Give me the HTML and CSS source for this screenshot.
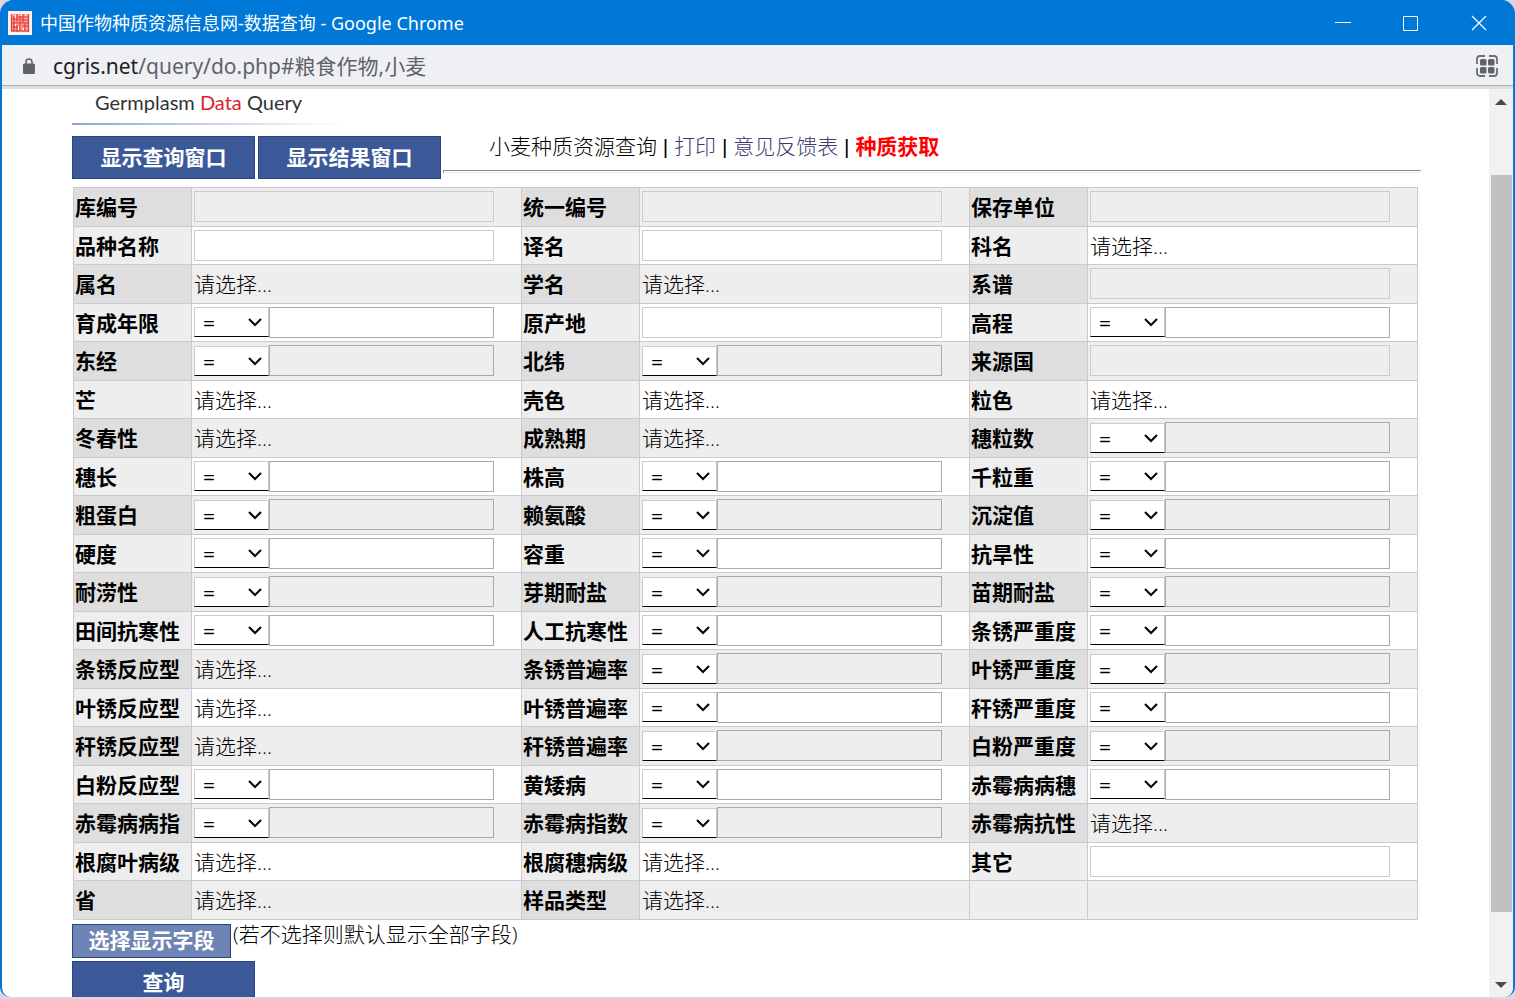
FILE: index.html
```
<!DOCTYPE html>
<html lang="zh-CN">
<head>
<meta charset="utf-8">
<title>中国作物种质资源信息网-数据查询</title>
<link rel="stylesheet" href="styles.css">
</head>
<body>
<div class="window">
  <header class="titlebar">
    <svg class="favicon" viewBox="0 0 24 24" aria-hidden="true">
      <rect width="24" height="24" fill="#fdf1ef"/>
      <rect x="3" y="3" width="18" height="18" fill="#f8a49c"/>
      <path d="M3.500 3.500v17M9 3v8M12 5v15M15 3v9M20.500 3v18M3 8h8M10 6h11M3 12h18M13 9h7M6 5v15M3 16h7M14 15h6M17 12v8M9 14v7M4 20h16" stroke="#e23a34" stroke-width="1.200" fill="none"/>
      <path d="M7.500 4v3M13.500 3v2M18 4v1M7.500 13v2M15.500 17v2M10.500 16v3" stroke="#fff" stroke-width="1"/>
    </svg>
    <span class="window-title">中国作物种质资源信息网-数据查询 - Google Chrome</span>
    <div class="window-controls">
      <button type="button" aria-label="最小化"><svg viewBox="0 0 16 16"><path d="M0 7.500h16"/></svg></button>
      <button type="button" aria-label="最大化"><svg viewBox="0 0 16 16"><path d="M.5 1.500h14v14H.5z"/></svg></button>
      <button type="button" aria-label="关闭"><svg viewBox="0 0 16 16"><path d="M1 1l14 14M15 1l-14 14" stroke-width="1.200"/></svg></button>
    </div>
  </header>
  <div class="addressbar">
    <svg class="lock" viewBox="0 0 12 16" aria-hidden="true"><path d="M3 7V4a3 3 0 0 1 6 0v3" fill="none" stroke="#5f6368" stroke-width="1.600"/><rect y="5.500" width="12" height="10.500" rx="1.500" fill="#5f6368"/></svg>
    <span class="url"><span class="host">cgris.net</span>/query/do.php#粮食作物,小麦</span>
    <button type="button" class="qr" aria-label="二维码"><svg viewBox="0 0 22 22"><path d="M9 1H4a3 3 0 0 0-3 3v5M13 1h5a3 3 0 0 1 3 3v5M9 21H4a3 3 0 0 1-3-3v-5M13 21h5a3 3 0 0 0 3-3v-5" fill="none" stroke="#6b6e72" stroke-width="1.800"/><g fill="#5f6368"><rect x="4" y="4" width="6.500" height="6.500" rx="1.500"/><rect x="12" y="4" width="6.500" height="6.500" rx="1.500"/><rect x="4" y="12" width="6.500" height="6.500" rx="1.500"/><rect x="12" y="12" width="6.500" height="6.500" rx="1.500"/></g></svg></button>
  </div>
  <div class="viewport">
    <main class="page">
      <div class="logo">Germplasm <span>Data</span> Query</div>
      <div class="toolbar">
        <button type="button" class="btn">显示查询窗口</button>
        <button type="button" class="btn">显示结果窗口</button>
        <div class="crumbs">
          <nav>小麦种质资源查询 | <a href="#print">打印</a> | <a href="#feedback">意见反馈表</a> | <a href="#obtain" class="obtain">种质获取</a></nav>
          <hr>
        </div>
      </div>
      <form>
        <table class="fields">
          <colgroup><col class="name"><col><col class="name"><col><col class="name"><col></colgroup>
          <tbody>
          <tr>
            <th><label for="f1">库编号</label></th><td><input id="f1" class="text"></td>
            <th><label for="f2">统一编号</label></th><td><input id="f2" class="text"></td>
            <th><label for="f3">保存单位</label></th><td><input id="f3" class="text"></td>
          </tr>
          <tr>
            <th><label for="f4">品种名称</label></th><td><input id="f4" class="text"></td>
            <th><label for="f5">译名</label></th><td><input id="f5" class="text"></td>
            <th><label for="f6">科名</label></th><td><button type="button" id="f6" class="pick">请选择...</button></td>
          </tr>
          <tr>
            <th><label for="f7">属名</label></th><td><button type="button" id="f7" class="pick">请选择...</button></td>
            <th><label for="f8">学名</label></th><td><button type="button" id="f8" class="pick">请选择...</button></td>
            <th><label for="f9">系谱</label></th><td><input id="f9" class="text"></td>
          </tr>
          <tr>
            <th><label for="f10">育成年限</label></th><td><div class="compare"><select aria-label="育成年限比较"><option>=</option></select><input id="f10"></div></td>
            <th><label for="f11">原产地</label></th><td><input id="f11" class="text"></td>
            <th><label for="f12">高程</label></th><td><div class="compare"><select aria-label="高程比较"><option>=</option></select><input id="f12"></div></td>
          </tr>
          <tr>
            <th><label for="f13">东经</label></th><td><div class="compare"><select aria-label="东经比较"><option>=</option></select><input id="f13"></div></td>
            <th><label for="f14">北纬</label></th><td><div class="compare"><select aria-label="北纬比较"><option>=</option></select><input id="f14"></div></td>
            <th><label for="f15">来源国</label></th><td><input id="f15" class="text"></td>
          </tr>
          <tr>
            <th><label for="f16">芒</label></th><td><button type="button" id="f16" class="pick">请选择...</button></td>
            <th><label for="f17">壳色</label></th><td><button type="button" id="f17" class="pick">请选择...</button></td>
            <th><label for="f18">粒色</label></th><td><button type="button" id="f18" class="pick">请选择...</button></td>
          </tr>
          <tr>
            <th><label for="f19">冬春性</label></th><td><button type="button" id="f19" class="pick">请选择...</button></td>
            <th><label for="f20">成熟期</label></th><td><button type="button" id="f20" class="pick">请选择...</button></td>
            <th><label for="f21">穗粒数</label></th><td><div class="compare"><select aria-label="穗粒数比较"><option>=</option></select><input id="f21"></div></td>
          </tr>
          <tr>
            <th><label for="f22">穗长</label></th><td><div class="compare"><select aria-label="穗长比较"><option>=</option></select><input id="f22"></div></td>
            <th><label for="f23">株高</label></th><td><div class="compare"><select aria-label="株高比较"><option>=</option></select><input id="f23"></div></td>
            <th><label for="f24">千粒重</label></th><td><div class="compare"><select aria-label="千粒重比较"><option>=</option></select><input id="f24"></div></td>
          </tr>
          <tr>
            <th><label for="f25">粗蛋白</label></th><td><div class="compare"><select aria-label="粗蛋白比较"><option>=</option></select><input id="f25"></div></td>
            <th><label for="f26">赖氨酸</label></th><td><div class="compare"><select aria-label="赖氨酸比较"><option>=</option></select><input id="f26"></div></td>
            <th><label for="f27">沉淀值</label></th><td><div class="compare"><select aria-label="沉淀值比较"><option>=</option></select><input id="f27"></div></td>
          </tr>
          <tr>
            <th><label for="f28">硬度</label></th><td><div class="compare"><select aria-label="硬度比较"><option>=</option></select><input id="f28"></div></td>
            <th><label for="f29">容重</label></th><td><div class="compare"><select aria-label="容重比较"><option>=</option></select><input id="f29"></div></td>
            <th><label for="f30">抗旱性</label></th><td><div class="compare"><select aria-label="抗旱性比较"><option>=</option></select><input id="f30"></div></td>
          </tr>
          <tr>
            <th><label for="f31">耐涝性</label></th><td><div class="compare"><select aria-label="耐涝性比较"><option>=</option></select><input id="f31"></div></td>
            <th><label for="f32">芽期耐盐</label></th><td><div class="compare"><select aria-label="芽期耐盐比较"><option>=</option></select><input id="f32"></div></td>
            <th><label for="f33">苗期耐盐</label></th><td><div class="compare"><select aria-label="苗期耐盐比较"><option>=</option></select><input id="f33"></div></td>
          </tr>
          <tr>
            <th><label for="f34">田间抗寒性</label></th><td><div class="compare"><select aria-label="田间抗寒性比较"><option>=</option></select><input id="f34"></div></td>
            <th><label for="f35">人工抗寒性</label></th><td><div class="compare"><select aria-label="人工抗寒性比较"><option>=</option></select><input id="f35"></div></td>
            <th><label for="f36">条锈严重度</label></th><td><div class="compare"><select aria-label="条锈严重度比较"><option>=</option></select><input id="f36"></div></td>
          </tr>
          <tr>
            <th><label for="f37">条锈反应型</label></th><td><button type="button" id="f37" class="pick">请选择...</button></td>
            <th><label for="f38">条锈普遍率</label></th><td><div class="compare"><select aria-label="条锈普遍率比较"><option>=</option></select><input id="f38"></div></td>
            <th><label for="f39">叶锈严重度</label></th><td><div class="compare"><select aria-label="叶锈严重度比较"><option>=</option></select><input id="f39"></div></td>
          </tr>
          <tr>
            <th><label for="f40">叶锈反应型</label></th><td><button type="button" id="f40" class="pick">请选择...</button></td>
            <th><label for="f41">叶锈普遍率</label></th><td><div class="compare"><select aria-label="叶锈普遍率比较"><option>=</option></select><input id="f41"></div></td>
            <th><label for="f42">秆锈严重度</label></th><td><div class="compare"><select aria-label="秆锈严重度比较"><option>=</option></select><input id="f42"></div></td>
          </tr>
          <tr>
            <th><label for="f43">秆锈反应型</label></th><td><button type="button" id="f43" class="pick">请选择...</button></td>
            <th><label for="f44">秆锈普遍率</label></th><td><div class="compare"><select aria-label="秆锈普遍率比较"><option>=</option></select><input id="f44"></div></td>
            <th><label for="f45">白粉严重度</label></th><td><div class="compare"><select aria-label="白粉严重度比较"><option>=</option></select><input id="f45"></div></td>
          </tr>
          <tr>
            <th><label for="f46">白粉反应型</label></th><td><div class="compare"><select aria-label="白粉反应型比较"><option>=</option></select><input id="f46"></div></td>
            <th><label for="f47">黄矮病</label></th><td><div class="compare"><select aria-label="黄矮病比较"><option>=</option></select><input id="f47"></div></td>
            <th><label for="f48">赤霉病病穗</label></th><td><div class="compare"><select aria-label="赤霉病病穗比较"><option>=</option></select><input id="f48"></div></td>
          </tr>
          <tr>
            <th><label for="f49">赤霉病病指</label></th><td><div class="compare"><select aria-label="赤霉病病指比较"><option>=</option></select><input id="f49"></div></td>
            <th><label for="f50">赤霉病指数</label></th><td><div class="compare"><select aria-label="赤霉病指数比较"><option>=</option></select><input id="f50"></div></td>
            <th><label for="f51">赤霉病抗性</label></th><td><button type="button" id="f51" class="pick">请选择...</button></td>
          </tr>
          <tr>
            <th><label for="f52">根腐叶病级</label></th><td><button type="button" id="f52" class="pick">请选择...</button></td>
            <th><label for="f53">根腐穗病级</label></th><td><button type="button" id="f53" class="pick">请选择...</button></td>
            <th><label for="f54">其它</label></th><td><input id="f54" class="text"></td>
          </tr>
          <tr>
            <th><label for="f55">省</label></th><td><button type="button" id="f55" class="pick">请选择...</button></td>
            <th><label for="f56">样品类型</label></th><td><button type="button" id="f56" class="pick">请选择...</button></td>
            <td></td><td></td>
          </tr>
          </tbody>
        </table>
        <div class="columns-row">
          <button type="button" class="btn btn-light">选择显示字段</button>
          <span>(若不选择则默认显示全部字段)</span>
        </div>
        <button type="submit" class="btn">查询</button>
      </form>
    </main>
    <div class="scrollbar" aria-hidden="true">
      <svg class="arrow" viewBox="0 0 12 6"><path d="M0 6L6 0l6 6z"/></svg>
      <div class="track"><div class="thumb"></div></div>
      <svg class="arrow" viewBox="0 0 12 6"><path d="M0 0h12L6 6z"/></svg>
    </div>
  </div>
</div>
</body>
</html>
```
FILE: styles.css
```
* { box-sizing: border-box; }

html, body { height: 100%; margin: 0; }

body {
  background: #ddd6e2;
  color: #000;
  font: 21px/28px "Open Sans", "Noto Sans CJK SC", sans-serif;
  overflow: hidden;
  padding-bottom: 2px;
}

button, input, select { font: inherit; color: inherit; margin: 0; }

.window {
  display: flex;
  flex-direction: column;
  height: 100%;
  border: solid #0078d7;
  border-width: 0 2px;
  border-radius: 14px 14px 10px 10px;
  background: #0078d7;
  overflow: hidden;
}

.titlebar, .addressbar { font-family: "Noto Sans", "Noto Sans CJK SC", sans-serif; }

.titlebar {
  display: flex;
  flex: none;
  align-items: center;
  height: 45px;
  padding-left: 6px;
  background: #0078d7;
  color: #fff;
  font-size: 18px;
}
.favicon { width: 24px; height: 24px; margin-right: 8px; }
.window-controls { display: flex; margin-left: auto; }
.window-controls button {
  width: 68px;
  height: 45px;
  padding: 0;
  border: 0;
  background: none;
}
.window-controls svg {
  display: block;
  width: 16px;
  height: 16px;
  margin: 0 auto;
  fill: none;
  stroke: #fff;
}

.addressbar {
  display: flex;
  flex: none;
  align-items: center;
  height: 44px;
  padding: 0 15px 0 21px;
  background: #eff0f3;
  border-bottom: 3px solid #dedfe1;
  box-shadow: inset 0 -1px #aeafb1;
  color: #5f6368;
}
.lock { width: 12px; height: 16px; margin-right: 18px; }
.host { color: #202124; }
.qr { margin-left: auto; padding: 0; border: 0; background: none; }
.qr svg { display: block; width: 22px; height: 22px; }

.viewport {
  display: flex;
  flex: 1;
  min-height: 0;
  background: #fff;
}

.page {
  flex: 1;
  min-width: 0;
  padding: 0 68px 0 70px;
  overflow: hidden;
}

.logo {
  height: 36px;
  padding-left: 23px;
  background: linear-gradient(90deg, #8ea5cd, #c3d2ea 50%, #fff) left bottom / 270px 2px no-repeat;
  color: #333;
  font: 20px/26px Lato, sans-serif;
}
.logo span { color: #d8232a; }

.toolbar {
  display: flex;
  gap: 3px;
  margin-top: 11px;
}

.btn {
  display: block;
  flex: none;
  width: 183px;
  height: 43px;
  padding: 0 0 2px;
  border: 1px solid #29447e;
  background: #3b5998;
  color: #fff;
  font-weight: 700;
}

.crumbs { flex: 1; margin-left: -1px; }
.crumbs nav {
  padding-left: 46px;
  font-family: "Liberation Sans", "Noto Sans CJK SC", sans-serif;
  font-weight: 300;
  line-height: 22px;
}
.crumbs a { color: #3b3b70; text-decoration: none; }
.crumbs .obtain { color: #f00; font-weight: 700; }
.crumbs hr {
  height: 3px;
  margin: 12px 0 0;
  border: 1px solid;
  border-color: #888 #eee #eee #888;
}

form { padding: 8px 3px 0 0; }

.fields {
  width: calc(100% - 1px);
  margin-left: 1px;
  border-collapse: collapse;
  table-layout: fixed;
}
.fields .name { width: 118px; }
.fields th, .fields td {
  height: 38px;
  padding: 0 2px;
  border: 1px solid #c8cacc;
  text-align: left;
  line-height: 30px;
}
.fields th { padding-left: 1px; background: #eee; white-space: nowrap; }
.fields label { display: block; padding-top: 1px; }
.fields tr:nth-child(odd) td { height: 39px; padding-bottom: 1px; background: #eee; }
.fields tr:nth-child(odd) th { height: 39px; padding-bottom: 1px; background: #dedede; }

.fields input {
  display: block;
  height: 31px;
  padding: 0 4px;
  border: 1px solid #a9a9a9;
  border-radius: 0;
  background: transparent;
}
.fields .text, .compare { width: calc(100% - 25px); }
.fields .text { border-color: #ccc; }
.pick {
  display: block;
  padding: 1px 0 0;
  border: 0;
  background: none;
  font-weight: 300;
}
.compare { display: flex; }
.compare input { flex: 1; min-width: 0; }
.compare select {
  appearance: none;
  width: 75px;
  height: 30px;
  padding: 0 8px 2px;
  border: 1px solid #ccc;
  border-bottom-color: #000;
  border-radius: 0;
  background: #fff url("data:image/svg+xml,%3Csvg xmlns='http://www.w3.org/2000/svg' viewBox='0 0 14 9'%3E%3Cpath d='M1 1l6 6 6-6' fill='none' stroke='%23000' stroke-width='2'/%3E%3C/svg%3E") right 6px center / 14px 9px no-repeat;
}
.fields tr:nth-child(odd) select { align-self: flex-end; }

.columns-row {
  display: flex;
  gap: 2px;
  margin: 4px 0 3px;
  font-weight: 300;
  line-height: 20px;
}
.btn-light { width: 159px; height: 34px; background: #6d84b4; }

.scrollbar {
  display: flex;
  flex: none;
  flex-direction: column;
  align-items: center;
  width: 24px;
  padding: 10px 0 9px;
  background: #f1f1f1;
}
.arrow { width: 12px; height: 6px; fill: #4a4a4a; }
.track { flex: 1; align-self: stretch; padding: 0 1px 0 2px; }
.thumb { height: 84%; margin-top: 70px; background: #c1c1c1; }
```
